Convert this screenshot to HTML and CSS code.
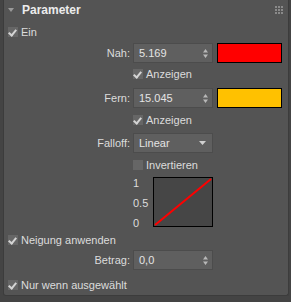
FILE: index.html
```html
<!DOCTYPE html>
<html>
<head>
<meta charset="utf-8">
<link rel="stylesheet" href="styles.css">
</head>
<body>
<div class="panel">
  <div class="head">
    <span class="tri"></span>
    <span class="title">Parameter</span>
    <svg class="grip" width="8" height="8" viewBox="0 0 8 8"><g fill="#8a8a8a"><rect x="0" y="0" width="2" height="2"/><rect x="3" y="0" width="2" height="2"/><rect x="6" y="0" width="2" height="2"/><rect x="0" y="3" width="2" height="2"/><rect x="3" y="3" width="2" height="2"/><rect x="6" y="3" width="2" height="2"/><rect x="0" y="6" width="2" height="2"/><rect x="3" y="6" width="2" height="2"/><rect x="6" y="6" width="2" height="2"/></g></svg>
  </div>

  <div class="chk r-ein"><span class="box on"></span>Ein</div>

  <div class="field r-nah"><span class="lbl">Nah:</span><div class="spin"><span>5.169</span><svg class="arr" width="5" height="9" viewBox="0 0 5 9"><path d="M0 3.5L2.5 0L5 3.5Z M0 5.5L2.5 9L5 5.5Z" fill="#b8b8b8"/></svg></div><div class="swatch red"></div></div>
  <div class="chk sub r-a1"><span class="box on"></span>Anzeigen</div>

  <div class="field r-fern"><span class="lbl">Fern:</span><div class="spin"><span>15.045</span><svg class="arr" width="5" height="9" viewBox="0 0 5 9"><path d="M0 3.5L2.5 0L5 3.5Z M0 5.5L2.5 9L5 5.5Z" fill="#b8b8b8"/></svg></div><div class="swatch yellow"></div></div>
  <div class="chk sub r-a2"><span class="box on"></span>Anzeigen</div>

  <div class="field r-fall"><span class="lbl">Falloff:</span><div class="spin drop"><span>Linear</span><svg class="arr" width="7" height="4" viewBox="0 0 7 4"><path d="M0 0L7 0L3.5 4Z" fill="#d0d0d0"/></svg></div></div>
  <div class="chk sub r-inv"><span class="box"></span>Invertieren</div>

  <div class="graphrow">
    <div class="ticks"><span>1</span><span>0.5</span><span>0</span></div>
    <svg class="graph" width="60" height="50" viewBox="0 0 60 50"><rect x="0.5" y="0.5" width="59" height="49" fill="#464646" stroke="#000"/><line x1="2" y1="48" x2="58" y2="2" stroke="#ff0000" stroke-width="2"/></svg>
  </div>

  <div class="chk r-nei"><span class="box on"></span>Neigung anwenden</div>
  <div class="field r-bet"><span class="lbl">Betrag:</span><div class="spin"><span>0,0</span><svg class="arr" width="5" height="9" viewBox="0 0 5 9"><path d="M0 3.5L2.5 0L5 3.5Z M0 5.5L2.5 9L5 5.5Z" fill="#b8b8b8"/></svg></div></div>
  <div class="chk r-nur"><span class="box on"></span>Nur wenn ausgewählt</div>
</div>
</body>
</html>
```

FILE: styles.css
```css
html, body {
  margin: 0;
  padding: 0;
  background: #444444;
  width: 291px;
  height: 302px;
  overflow: hidden;
}
body {
  font-family: "Liberation Sans", Arial, sans-serif;
  font-size: 11px;
  color: #dcdcdc;
}
.panel {
  margin: 0 2px 0 3px;
  height: 296px;
  box-sizing: border-box;
  background: #545454;
  border: 1px solid #3c3c3c;
  border-top: none;
  border-radius: 0 0 3px 3px;
  padding: 0 0 0 4px;
  display: flex;
  flex-direction: column;
}
.head {
  height: 20px;
  display: flex;
  align-items: center;
  position: relative;
}
.tri {
  width: 0;
  height: 0;
  border-left: 3px solid transparent;
  border-right: 3px solid transparent;
  border-top: 4px solid #9a9a9a;
  margin-left: 0;
  margin-right: 8px;
  margin-top: -1px;
}
.title {
  font-weight: bold;
  font-size: 12px;
  color: #ececec;
}
.grip {
  position: absolute;
  right: 5px;
  top: 6px;
}
.chk {
  height: 12px;
  display: flex;
  align-items: center;
  line-height: 12px;
}
.box {
  width: 10px;
  height: 10px;
  background: #666666;
  margin-left: 0;
  margin-right: 3px;
  position: relative;
  flex: none;
}
.box.on::after {
  content: "";
  position: absolute;
  left: 2px;
  top: 1px;
  width: 3px;
  height: 6px;
  border-right: 2px solid #d4d4d4;
  border-bottom: 2px solid #d4d4d4;
  transform: rotate(40deg);
}
.sub .box {
  margin-left: 125px;
}
.field {
  height: 20px;
  display: flex;
  align-items: center;
}
.lbl {
  width: 125px;
  text-align: right;
  padding-right: 3px;
  box-sizing: border-box;
}
.spin {
  width: 80px;
  height: 20px;
  box-sizing: border-box;
  background: #5f5f5f;
  border: 1px solid #4c4c4c;
  display: flex;
  align-items: center;
  justify-content: space-between;
  padding: 0 4px 0 5px;
  color: #e4e4e4;
}
.drop {
  padding-right: 6px;
}
.swatch {
  width: 65px;
  height: 20px;
  box-sizing: border-box;
  border: 1px solid #000;
  margin-left: 4px;
}
.red { background: #ff0000; }
.yellow { background: #ffc100; }

.r-ein { margin-top: 6px; }
.r-nah { margin-top: 5px; }
.r-a1 { margin-top: 5px; }
.r-fern { margin-top: 8px; }
.r-a2 { margin-top: 6px; }
.r-fall { margin-top: 7px; }
.r-inv { margin-top: 6px; }
.graphrow {
  margin-top: 6px;
  display: flex;
  height: 50px;
}
.ticks {
  width: 20px;
  margin-left: 125px;
  display: flex;
  flex-direction: column;
  justify-content: space-between;
  line-height: 12px;
  height: 52px;
}
.graph { display: block; }
.r-nei { margin-top: 7px; }
.r-bet { margin-top: 4px; }
.r-nur { margin-top: 9px; }
```
